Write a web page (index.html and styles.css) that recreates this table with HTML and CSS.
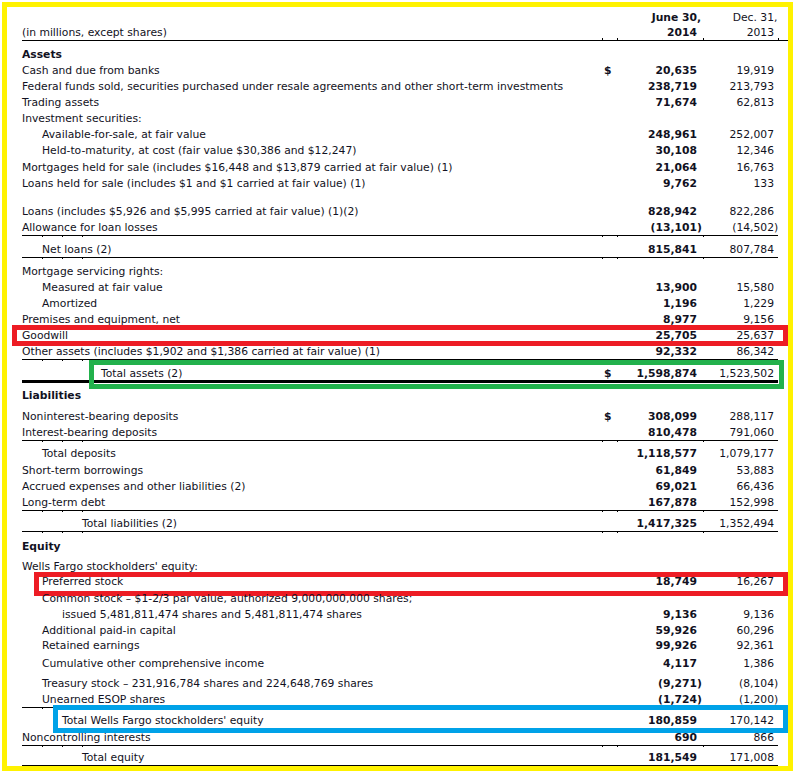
FILE: index.html
```html
<!DOCTYPE html>
<html lang="en">
<head>
<meta charset="utf-8">
<title>Consolidated Balance Sheet</title>
<link rel="stylesheet" href="styles.css">
</head>
<body>
<div class="frame">
  <div class="sheet">
    <div class="row">
      <span class="label"></span><span class="cur"></span>
      <span class="num b">June 30<span class="hang">,</span></span>
      <span class="num dec">Dec. 31<span class="hang">,</span></span>
    </div>
    <div class="row rule-head gn1">
      <span class="label">(in millions, except shares)</span><span class="cur"></span>
      <span class="num b">2014</span><span class="num dec">2013</span>
    </div>

    <div class="row g6"><span class="label b">Assets</span></div>
    <div class="row"><span class="label">Cash and due from banks</span><span class="cur b">$</span><span class="num b">20,635</span><span class="num dec">19,919</span></div>
    <div class="row"><span class="label">Federal funds sold, securities purchased under resale agreements and other short-term investments</span><span class="cur"></span><span class="num b">238,719</span><span class="num dec">213,793</span></div>
    <div class="row"><span class="label">Trading assets</span><span class="cur"></span><span class="num b">71,674</span><span class="num dec">62,813</span></div>
    <div class="row"><span class="label">Investment securities:</span></div>
    <div class="row"><span class="label i1">Available-for-sale, at fair value</span><span class="cur"></span><span class="num b">248,961</span><span class="num dec">252,007</span></div>
    <div class="row"><span class="label i1">Held-to-maturity, at cost (fair value $30,386 and $12,247)</span><span class="cur"></span><span class="num b">30,108</span><span class="num dec">12,346</span></div>
    <div class="row g1"><span class="label">Mortgages held for sale (includes $16,448 and $13,879 carried at fair value) (1)</span><span class="cur"></span><span class="num b">21,064</span><span class="num dec">16,763</span></div>
    <div class="row"><span class="label">Loans held for sale (includes $1 and $1 carried at fair value) (1)</span><span class="cur"></span><span class="num b">9,762</span><span class="num dec">133</span></div>

    <div class="row g12"><span class="label">Loans (includes $5,926 and $5,995 carried at fair value) (1)(2)</span><span class="cur"></span><span class="num b">828,942</span><span class="num dec">822,286</span></div>
    <div class="row line"><span class="label">Allowance for loan losses</span><span class="cur"></span><span class="num b">(13,101<span class="hang">)</span></span><span class="num dec">(14,502<span class="hang">)</span></span></div>
    <div class="row line g6"><span class="label i1">Net loans (2)</span><span class="cur"></span><span class="num b">815,841</span><span class="num dec">807,784</span></div>
    <div class="row g6"><span class="label">Mortgage servicing rights:</span></div>
    <div class="row"><span class="label i1">Measured at fair value</span><span class="cur"></span><span class="num b">13,900</span><span class="num dec">15,580</span></div>
    <div class="row"><span class="label i1">Amortized</span><span class="cur"></span><span class="num b">1,196</span><span class="num dec">1,229</span></div>
    <div class="row"><span class="label">Premises and equipment, net</span><span class="cur"></span><span class="num b">8,977</span><span class="num dec">9,156</span></div>
    <div class="row mark-red-a"><span class="label">Goodwill</span><span class="cur"></span><span class="num b">25,705</span><span class="num dec">25,637</span></div>
    <div class="row line"><span class="label">Other assets (includes $1,902 and $1,386 carried at fair value) (1)</span><span class="cur"></span><span class="num b">92,332</span><span class="num dec">86,342</span></div>
    <div class="row line-thick g6 mark-green"><span class="label i4">Total assets (2)</span><span class="cur b">$</span><span class="num b">1,598,874</span><span class="num dec">1,523,502</span></div>

    <div class="row g5"><span class="label b">Liabilities</span></div>
    <div class="row g5"><span class="label">Noninterest-bearing deposits</span><span class="cur b">$</span><span class="num b">308,099</span><span class="num dec">288,117</span></div>
    <div class="row line"><span class="label">Interest-bearing deposits</span><span class="cur"></span><span class="num b">810,478</span><span class="num dec">791,060</span></div>
    <div class="row g5"><span class="label i1">Total deposits</span><span class="cur"></span><span class="num b">1,118,577</span><span class="num dec">1,079,177</span></div>
    <div class="row g1"><span class="label">Short-term borrowings</span><span class="cur"></span><span class="num b">61,849</span><span class="num dec">53,883</span></div>
    <div class="row"><span class="label">Accrued expenses and other liabilities (2)</span><span class="cur"></span><span class="num b">69,021</span><span class="num dec">66,436</span></div>
    <div class="row line"><span class="label">Long-term debt</span><span class="cur"></span><span class="num b">167,878</span><span class="num dec">152,998</span></div>
    <div class="row line g5"><span class="label i3">Total liabilities (2)</span><span class="cur"></span><span class="num b">1,417,325</span><span class="num dec">1,352,494</span></div>

    <div class="row g7"><span class="label b">Equity</span></div>
    <div class="row g4"><span class="label">Wells Fargo stockholders' equity:</span></div>
    <div class="row gn1 mark-red-b"><span class="label i1">Preferred stock</span><span class="cur"></span><span class="num b">18,749</span><span class="num dec">16,267</span></div>
    <div class="row g1"><span class="label i1">Common stock – $1-2/3 par value, authorized 9,000,000,000 shares;</span></div>
    <div class="row"><span class="label i2">issued 5,481,811,474 shares and 5,481,811,474 shares</span><span class="cur"></span><span class="num b">9,136</span><span class="num dec">9,136</span></div>
    <div class="row"><span class="label i1">Additional paid-in capital</span><span class="cur"></span><span class="num b">59,926</span><span class="num dec">60,296</span></div>
    <div class="row gn1"><span class="label i1">Retained earnings</span><span class="cur"></span><span class="num b">99,926</span><span class="num dec">92,361</span></div>
    <div class="row g2"><span class="label i1">Cumulative other comprehensive income</span><span class="cur"></span><span class="num b">4,117</span><span class="num dec">1,386</span></div>
    <div class="row g4"><span class="label i1">Treasury stock – 231,916,784 shares and 224,648,769 shares</span><span class="cur"></span><span class="num b">(9,271<span class="hang">)</span></span><span class="num dec">(8,104<span class="hang">)</span></span></div>
    <div class="row line"><span class="label i1">Unearned ESOP shares</span><span class="cur"></span><span class="num b">(1,724<span class="hang">)</span></span><span class="num dec">(1,200<span class="hang">)</span></span></div>
    <div class="row g5 mark-blue"><span class="label i2">Total Wells Fargo stockholders' equity</span><span class="cur"></span><span class="num b">180,859</span><span class="num dec">170,142</span></div>
    <div class="row line g1"><span class="label">Noncontrolling interests</span><span class="cur"></span><span class="num b">690</span><span class="num dec">866</span></div>
    <div class="row line g4"><span class="label i3">Total equity</span><span class="cur"></span><span class="num b">181,549</span><span class="num dec">171,008</span></div>
  </div>
</div>
</body>
</html>
```
FILE: styles.css
```css
* { box-sizing: border-box; }

html, body {
  margin: 0;
  padding: 0;
  background: #ffffff;
}

body {
  font-family: "DejaVu Sans", Verdana, sans-serif;
  font-size: 10.75px;
  color: #111122;
}

.frame {
  margin: 2px;
  width: 791px;
  height: 769px;
  border: 5px solid #fff200;
  overflow: hidden;
}

.sheet {
  padding: 3px 10px 0 15px;
}

.row {
  position: relative;
  display: grid;
  grid-template-columns: 580px 15px 86px 75px;
  height: 16px;
  line-height: 16px;
  white-space: nowrap;
}

.label { overflow: visible; }
.b { font-weight: bold; }

.i1 { padding-left: 20px; }
.i2 { padding-left: 40px; }
.i3 { padding-left: 60px; }
.i4 { padding-left: 79px; }

.cur { padding-left: 2px; }

.num {
  text-align: right;
  padding-right: 6px;
}
.num.dec { padding-right: 4px; }

.hang {
  display: inline-block;
  width: 0;
  overflow: visible;
}

/* vertical spacing between rows */
.g1 { margin-top: 1px; }
.g2 { margin-top: 2px; }
.g4 { margin-top: 4px; }
.g5 { margin-top: 5px; }
.g6 { margin-top: 6px; }
.g7 { margin-top: 7px; }
.g12 { margin-top: 12px; }
.gn1 { margin-top: -1px; }

/* rules */
.rule-head {
  border-bottom: 1px solid #000;
  margin-right: -10px;
  grid-template-columns: 580px 15px 86px 75px 10px;
}

.rule-head::after {
  content: "";
  position: absolute;
  left: 0;
  right: 0;
  bottom: 0;
  height: 2px;
  background:
    linear-gradient(#000, #000) 580px 0 / 1px 2px no-repeat,
    linear-gradient(#000, #000) 595px 0 / 1px 2px no-repeat,
    linear-gradient(#000, #000) 681px 0 / 1px 2px no-repeat,
    linear-gradient(#000, #000) 756px 0 / 1px 2px no-repeat;
}

.line { border-bottom: 1px solid #000; }

.line-thick {
  height: 17px;
  border-bottom: 3px solid #000;
}

.line::after,
.line-thick::after {
  content: "";
  position: absolute;
  left: 0;
  right: 0;
  top: 100%;
  height: 2px;
  background:
    linear-gradient(#000, #000) 20px 0 / 1px 2px no-repeat,
    linear-gradient(#000, #000) 40px 0 / 1px 2px no-repeat,
    linear-gradient(#000, #000) 60px 0 / 1px 2px no-repeat,
    linear-gradient(#000, #000) 580px 0 / 1px 2px no-repeat,
    linear-gradient(#000, #000) 595px 0 / 1px 2px no-repeat,
    linear-gradient(#000, #000) 681px 0 / 1px 2px no-repeat;
}

/* highlight boxes drawn over the statement */
.mark-red-a::before,
.mark-red-b::before,
.mark-green::before,
.mark-blue::before {
  content: "";
  position: absolute;
  border: 5px solid;
  pointer-events: none;
}

.mark-red-a::before {
  border-color: #ed1c24;
  left: -10px; right: -10px; top: -3px; bottom: -2px;
}

.mark-red-b::before {
  border-color: #ed1c24;
  left: 12px; right: -10px; top: -2px; bottom: -6px;
}

.mark-green::before {
  border-color: #22b14c;
  left: 67px; right: -6px; top: -6px; bottom: -9px;
}

.mark-blue::before {
  border-color: #00a2e8;
  left: 31px; right: -10px; top: -8px; bottom: -4px;
}
```
